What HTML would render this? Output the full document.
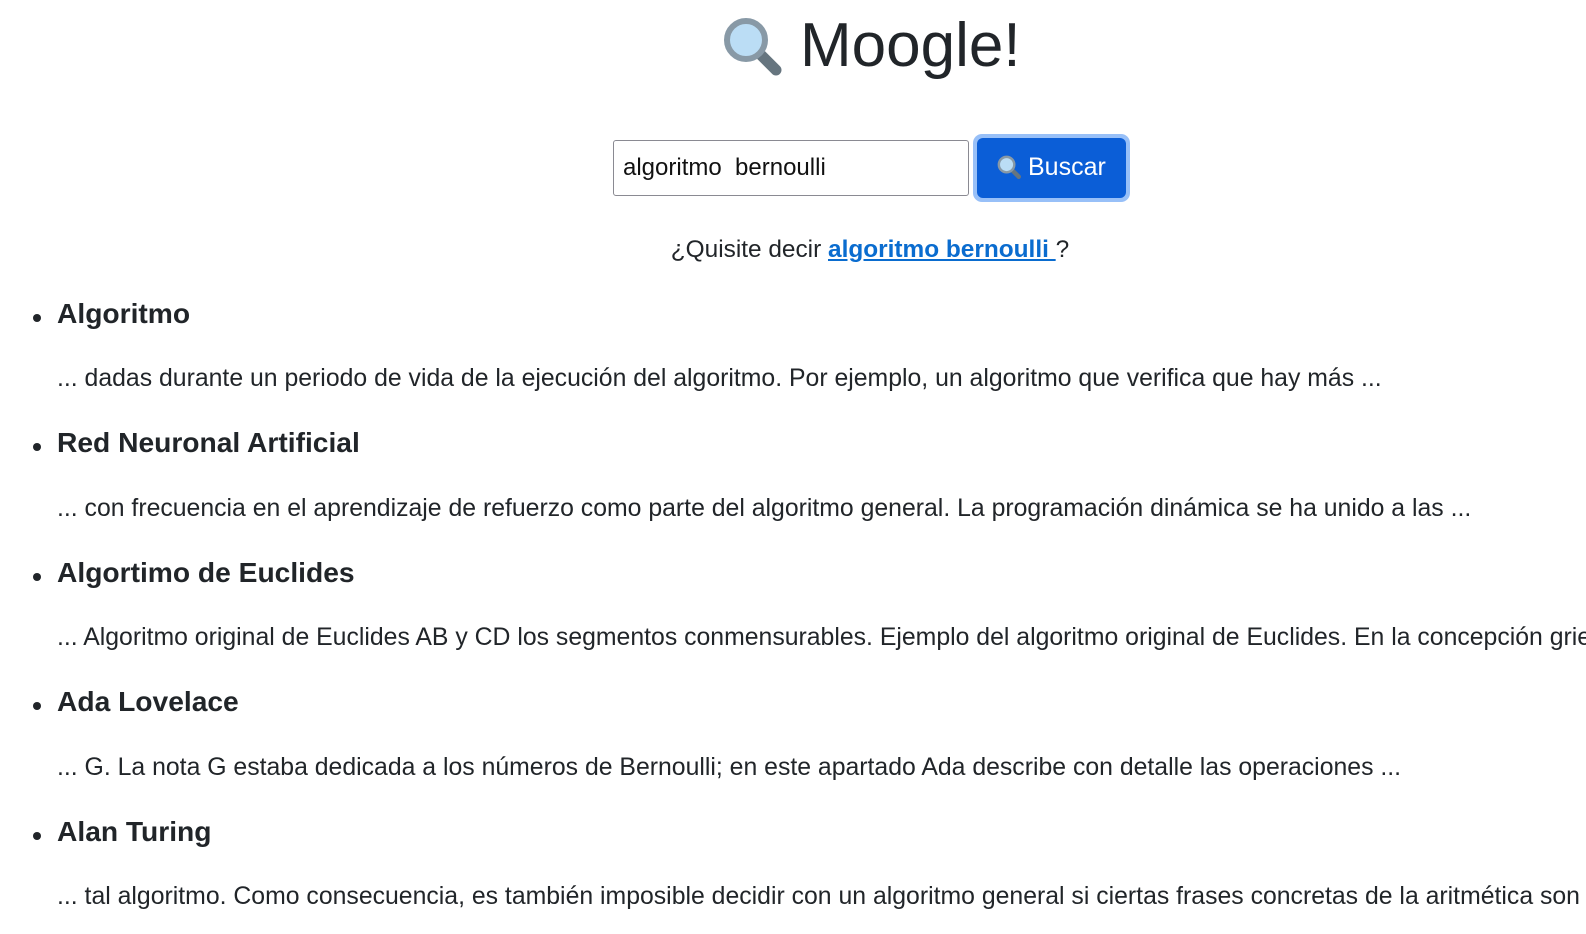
<!DOCTYPE html>
<html><head><meta charset="utf-8"><style>
body{margin:0;width:1586px;height:934px;overflow:hidden;background:#fff;font-family:"Liberation Sans",Arial,sans-serif;color:#212529;position:relative}
.a{position:absolute;white-space:nowrap}
h1{margin:0;font-weight:400;font-size:62px;left:800px;top:10px}
.inp{left:613px;top:140px;width:356px;height:56px;border:1px solid #8a8a92;border-radius:3px;box-sizing:border-box;font-size:24px;line-height:54px;padding-left:9px;color:#111}
.btn{left:973px;top:134px;width:157px;height:68px;border-radius:9px;background:#98c0f8}
.btn div{position:absolute;left:4px;top:4px;right:4px;bottom:4px;background:#0b5ed7;border-radius:6px;color:#fff;font-size:25px;line-height:58px}
.sug{left:0;width:1740px;text-align:center;top:236px;font-size:24.4px}
.sug a{color:#0a6ccf;font-weight:bold;text-decoration:underline}
.h{left:57px;font-size:28.2px;font-weight:bold}
.b{left:33px;width:8px;height:8px;border-radius:50%;background:#212529}
.s{left:57px;font-size:24.8px}
</style></head><body>
<svg class="a" style="left:720px;top:14px" width="64" height="64" viewBox="0 0 64 64">
<line x1="41" y1="41" x2="56" y2="56" stroke="#66757f" stroke-width="11" stroke-linecap="round"/>
<circle cx="26" cy="26" r="19" fill="#bbddf5" stroke="#8899a6" stroke-width="6"/>
</svg>
<h1 class="a">Moogle!</h1>
<div class="a inp">algoritmo&nbsp; bernoulli</div>
<div class="a btn"><div><svg style="position:absolute;left:19px;top:16px" width="26" height="26" viewBox="0 0 64 64"><line x1="41" y1="41" x2="56" y2="56" stroke="#66757f" stroke-width="11" stroke-linecap="round"/><circle cx="26" cy="26" r="19" fill="#bbddf5" stroke="#8899a6" stroke-width="6"/></svg><span style="position:absolute;left:51px">Buscar</span></div></div>
<div class="a sug">¿Quisite decir <a>algoritmo bernoulli </a>?</div>

<div class="a b" style="top:314px"></div><div class="a h" style="top:297px">Algoritmo</div>
<div class="a s" style="top:365px">... dadas durante un periodo de vida de la ejecución del algoritmo. Por ejemplo, un algoritmo que verifica que hay más ...</div>
<div class="a b" style="top:443px"></div><div class="a h" style="top:426px">Red Neuronal Artificial</div>
<div class="a s" style="top:495px">... con frecuencia en el aprendizaje de refuerzo como parte del algoritmo general. La programación dinámica se ha unido a las ...</div>
<div class="a b" style="top:573px"></div><div class="a h" style="top:556px">Algortimo de Euclides</div>
<div class="a s" style="top:624px">... Algoritmo original de Euclides AB y CD los segmentos conmensurables. Ejemplo del algoritmo original de Euclides. En la concepción griega</div>
<div class="a b" style="top:702px"></div><div class="a h" style="top:685px">Ada Lovelace</div>
<div class="a s" style="top:754px">... G. La nota G estaba dedicada a los números de Bernoulli; en este apartado Ada describe con detalle las operaciones ...</div>
<div class="a b" style="top:832px"></div><div class="a h" style="top:815px">Alan Turing</div>
<div class="a s" style="top:883px">... tal algoritmo. Como consecuencia, es también imposible decidir con un algoritmo general si ciertas frases concretas de la aritmética son</div>
</body></html>
